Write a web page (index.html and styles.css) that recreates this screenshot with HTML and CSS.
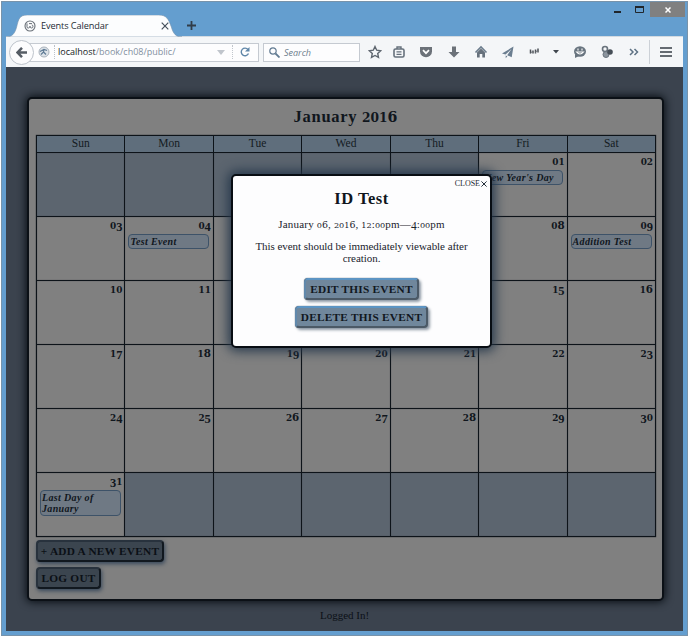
FILE: index.html
```html
<!DOCTYPE html>
<html lang="en">
<head>
<meta charset="utf-8">
<title>Events Calendar</title>
<link rel="stylesheet" href="styles.css">
</head>
<body>
<div class="window">
  <header class="titlebar">
    <div class="tab">
      <svg class="tab-shape" viewBox="0 0 182 22" preserveAspectRatio="none"><path d="M0 22C6 22 9 19 11 12C13 4 14 0 22 0H158C166 0 168 4 171 12C173 19 176 22 182 22Z" fill="#fcfdfe" stroke="#7793ac" stroke-width=".6"/></svg>
      <svg class="favicon" viewBox="0 0 12 12" fill="none" stroke="#697078"><circle cx="6" cy="6" r="5" stroke-width="1.1"/><path d="M3 3.500v3.300q0 1.500 1.500 1.200Q6 7.600 6 6.200q0 1.800 1.600 1.800Q9 8 9 6.200 9 5 7.800 5M5 3.600h3" stroke-width="1"/></svg>
      <span class="tab-title">Events Calendar</span>
      <svg class="tab-close" viewBox="0 0 8 8"><path d="M.7.7l6.6 6.6M7.3.7L.7 7.3" stroke="#46515c" stroke-width="1.2"/></svg>
    </div>
    <svg class="new-tab" viewBox="0 0 9 9"><path d="M4.5 0v9M0 4.5h9" stroke="#303c49" stroke-width="1.8"/></svg>
    <div class="controls">
      <svg class="min" viewBox="0 0 7 2"><path d="M0 1h7" stroke="#20262c" stroke-width="2"/></svg>
      <svg class="max" viewBox="0 0 9 7"><path d="M.5 1h8v5.500h-8z" fill="none" stroke="#20262c"/><path d="M0 1h9" stroke="#20262c" stroke-width="2"/></svg>
      <span class="win-close"><svg viewBox="0 0 6 6"><path d="M.5.5l5 5M5.500.5l-5 5" stroke="#fff" stroke-width="1.5"/></svg></span>
    </div>
  </header>
  <nav class="toolbar">
    <span class="back"><svg viewBox="0 0 11 11"><path d="M6 .8L1.500 5.500 6 10.200M2 5.500h9" fill="none" stroke="#555c64" stroke-width="2.500"/></svg></span>
    <div class="address">
      <svg class="globe" viewBox="0 0 12 12"><circle cx="6" cy="6" r="5" fill="#dce2e8" stroke="#aab3bc"/><path d="M2 5.500l4-2 3 1M6 3.500L5.500 6 3 8.500M5.500 6L8 8.500" fill="none" stroke="#5f7b95" stroke-width="1.2"/></svg>
      <span class="url"><b>localhost</b>/book/ch08/public/</span>
      <svg class="caret" viewBox="0 0 8 5"><path d="M0 0h8L4 5z" fill="#c0c5cc"/></svg>
      <span class="reload"><svg viewBox="0 0 10 10"><path d="M8.500 6.500A3.800 3.800 0 1 1 8 2.500" fill="none" stroke="#5f86a8" stroke-width="1.400"/><path d="M9.500 0v4.500H5z" fill="#5f86a8"/></svg></span>
    </div>
    <div class="search">
      <svg viewBox="0 0 11 11" fill="none" stroke="#627b92"><circle cx="4" cy="4" r="3.200" stroke-width="1.200"/><path d="M6.500 6.500l4 4" stroke-width="1.800"/></svg>
      <i>Search</i>
    </div>
    <div class="icons">
      <svg viewBox="0 0 14 14"><path d="M7 1.500l1.700 3.700 4 .5-3 2.700.8 4L7 10.500l-3.500 1.900.8-4-3-2.700 4-.5z" fill="none" stroke="#5e666f" stroke-width="1.400"/></svg>
      <svg viewBox="0 0 14 14"><rect x="2" y="4" width="10" height="8" rx="1.500" fill="none" stroke="#66717c" stroke-width="1.600"/><path d="M5 4V2h4v2" fill="none" stroke="#66717c" stroke-width="1.400"/><path d="M4.500 6.800h5M4.500 9.300h5" stroke="#66717c" stroke-width="1.200"/></svg>
      <svg viewBox="0 0 14 14"><path d="M1 2h12v4.500a6 5.700 0 0 1-12 0z" fill="#6c7279"/><path d="M4 5.200l3 3 3-3" fill="none" stroke="#fff" stroke-width="1.700"/></svg>
      <svg viewBox="0 0 14 14"><path d="M5 1.500h4V7h3.500L7 12.500 1.500 7H5z" fill="#6c7279"/></svg>
      <svg viewBox="0 0 14 14"><path d="M1.500 7.500L7 2l5.500 5.500" fill="none" stroke="#6c7d8d" stroke-width="1.600"/><path d="M3 7.500l4-4 4 4v5H8.300V9H5.700v3.500H3z" fill="#66717c"/></svg>
      <svg viewBox="0 0 14 14"><path d="M12.500 1.500L1 8.500l3.500 1 6-5.500-4.300 6.200 4.500 2zM4.700 10.500v2.700l1.700-2z" fill="#6b7e90"/></svg>
      <svg viewBox="0 0 14 14"><path d="M2.500 4.500v4M5 8.500V5.500M7.500 8.500V4.500M10 7.500V3.500" fill="none" stroke="#4c5157" stroke-width="1.500"/><path d="M2.500 8l2.500-2M7 7.500L10 5" stroke="#6d7278"/></svg>
      <svg class="drop" viewBox="0 0 6 4"><path d="M0 0h6L3 3.500z" fill="#3f464e"/></svg>
      <svg viewBox="0 0 14 14"><ellipse cx="7" cy="6.500" rx="6" ry="5.200" fill="#68747f"/><path d="M2 9v4l4-2" fill="#68747f"/><path d="M5 3.500v2M9 3.500v2M3.500 7q3.500 4 7 0z" fill="none" stroke="#fff" stroke-width="1.100"/></svg>
      <svg viewBox="0 0 14 14"><circle cx="5" cy="4" r="2.500" fill="none" stroke="#69737d" stroke-width="1.600"/><circle cx="6" cy="9.500" r="3" fill="#8b949d" stroke="#69737d"/><circle cx="10" cy="7" r="2.800" fill="#464e57"/></svg>
      <svg class="more" viewBox="0 0 14 14"><path d="M3 4l3 3-3 3M7.500 4l3 3-3 3" fill="none" stroke="#5f7284" stroke-width="1.500"/></svg>
      <span class="divider"></span>
      <svg viewBox="0 0 14 14"><path d="M1 3h12M1 7h12M1 11h12" stroke="#656b72" stroke-width="2"/></svg>
    </div>
  </nav>
  <main class="page">
    <section class="card">
      <h1>January 2016</h1>
      <div class="calendar" id="calendar"></div>
      <div class="actions">
        <a class="button dim add">+ Add a New Event</a>
        <a class="button dim out">Log Out</a>
      </div>
    </section>
    <p class="status">Logged In!</p>
  </main>
  <aside class="modal">
    <span class="close">CLOSE<svg viewBox="0 0 6 6"><path d="M.4.4l5.200 5.200M5.600.4L.4 5.600" stroke="#26313c"/></svg></span>
    <h2>ID Test</h2>
    <p class="when"><span class="figures">January 06, 2016, 12:00pm—4:00pm</span></p>
    <p class="about">This event should be immediately viewable after<br>creation.</p>
    <a class="button edit">Edit This Event</a>
    <a class="button delete">Delete This Event</a>
  </aside>
</div>
<script src="calendar.js"></script>
</body>
</html>
```
FILE: styles.css
```css
* { box-sizing: border-box; }
body { margin: 0; width: 690px; height: 638px; overflow: hidden; background: #fff; font-family: "Liberation Serif", serif; color: #10161d; }
svg { display: block; flex: none; }
.window { position: relative; width: 687px; height: 635px; margin: 1px 0 0 1px; padding: 0 4px; background: #649ecf; border: 1px solid #7893aa; }
.titlebar { height: 34px; display: flex; align-items: flex-end; position: relative; font-family: "Open Sans", sans-serif; }
.tab { width: 176px; height: 22px; position: relative; display: flex; align-items: center; padding: 0 13px 0 18px; margin-bottom: -1px; }
.tab-shape { position: absolute; left: 0; top: 0; width: 176px; height: 22px; }
.favicon { width: 12px; height: 12px; position: relative; }
.tab-title { position: relative; font-size: 9.2px; line-height: 14px; margin-left: 5px; letter-spacing: -.1px; color: #252c35; }
.tab-close { position: relative; width: 8px; height: 8px; margin-left: auto; }
.new-tab { width: 9px; height: 9px; margin: 0 0 6px 5px; }
.controls { align-self: flex-start; margin-left: auto; display: flex; align-items: flex-start; }
.min { width: 7px; height: 2px; margin: 9px 14px 0 0; }
.max { width: 9px; height: 7px; margin: 4px 6px 0 0; }
.win-close { width: 35px; height: 15px; margin-right: -2px; background: #808080; display: grid; place-items: center; }
.win-close svg { width: 6px; height: 6px; }
.toolbar { height: 31px; background: #f4f6f8; border-top: 1px solid #d3dae1; display: flex; align-items: center; font-family: "Open Sans", sans-serif; }
.back { width: 25px; height: 25px; border: 1px solid #bdc3cb; border-radius: 50%; background: #fcfcfd; display: grid; place-items: center; margin-left: 3px; position: relative; flex: none; }
.back svg { width: 11px; height: 11px; }
.address { width: 231px; height: 19px; margin-left: -6px; padding-left: 9px; border: 1px solid #c5cad1; background: #fdfdfe; display: flex; align-items: center; flex: none; }
.globe { width: 12px; height: 12px; }
.url { border-left: 1px dotted #bcc2c9; margin-left: 4px; padding-left: 3px; font-size: 9px; line-height: 14px; color: #8390a0; white-space: nowrap; }
.url b { font-weight: 400; color: #171d25; }
.caret { width: 8px; height: 5px; margin-left: auto; }
.reload { border-left: 1px dotted #c1c6cc; margin-left: 7px; padding: 2px 8px 2px 7px; }
.reload svg { width: 10px; height: 10px; }
.search { width: 97px; height: 19px; margin-left: 4px; padding-left: 5px; border: 1px solid #c5cad1; background: #fdfdfe; display: flex; align-items: center; gap: 4px; flex: none; font-size: 9px; color: #6c7c8c; }
.search svg { width: 11px; height: 11px; }
.icons { display: flex; align-items: center; margin-left: 8px; }
.icons svg { width: 14px; height: 14px; margin-right: 13.300px; }
.icons svg:first-child { margin-right: 10px; }
.icons svg.drop { width: 6px; height: 4px; margin: 0 14px 0 -3px; }
.icons svg.more { margin-right: 8px; }
.icons svg:last-child { margin: 0 0 0 9px; }
.divider { width: 1px; height: 24px; background: #ccd1d7; }
.page { height: 564px; background: #3b434e; padding-top: 30px; }
.card { width: 637px; height: 504px; margin-left: 21px; border: 2px solid #0b1016; border-radius: 5px; background: #808080; box-shadow: 0 0 8px 1px #080d13; padding: 7px 7px 0; }
h1 { margin: 0; height: 29px; line-height: 22px; font-size: 16.500px; letter-spacing: .7px; text-align: center; white-space: nowrap; }
.calendar { width: 620px; height: 402px; display: grid; grid-template-columns: repeat(7, 1fr); grid-template-rows: 16px repeat(6, 63px); gap: 1px; padding: 1px; background: #0d1319; box-shadow: 0 0 1px #10161d; }
.weekday { background: #5f6e7c; text-align: center; font-size: 11.500px; line-height: 15px; color: #141b22; }
.day { background: #808080; box-shadow: inset 0 0 1px #343a41; padding: 1px 3px 0; }
.day.empty { background: #5c656f; }
.date { height: 15px; line-height: 15px; font-size: 12px; font-weight: 700; text-align: right; margin-right: -1px; white-space: nowrap; }
.date.covered { visibility: hidden; }
.low, .tall, .drop-digit { font-family: "DejaVu Serif", serif; line-height: 1; letter-spacing: 0; }
.low { font-size: .74em; }
.tall { font-size: .86em; }
.drop-digit { font-family: "Liberation Serif", serif; font-size: 1.04em; vertical-align: -2px; line-height: 0; }
.low, .tall { line-height: 0; }
.event { width: 81px; min-height: 15px; border: 1px solid #3d5268; border-radius: 4px; background: #6f7984; padding: 1px; font-size: 10px; line-height: 11px; font-weight: 700; font-style: italic; letter-spacing: .35px; white-space: nowrap; margin-top: 1px; }
.actions { display: flex; flex-direction: column; align-items: flex-start; gap: 5px; padding-top: 3px; }
.button { display: grid; place-items: center; height: 22px; border: 2px solid #4b5966; border-top-color: #5c94c3; border-left-color: #6189ac; border-radius: 4px; background: #70879c; box-shadow: 2px 2px 3px #8d98a4, 0 0 1px #27323d; font-size: 11.300px; letter-spacing: .25px; font-weight: 700; text-transform: uppercase; color: #11171e; white-space: nowrap; }
.button.dim { background: #3b454f; border-color: #28323d #11181f #11181f #28323d; color: #0b1016; box-shadow: 1px 2px 4px #36475a; }
.add { width: 128px; }
.out { width: 65px; }
.status { margin: 5px 0 0; text-align: center; font-size: 11px; line-height: 18px; color: #0b1016; }
.modal { position: absolute; left: 229px; top: 172px; width: 261px; height: 174px; border: 2px solid #080d13; border-radius: 5px; background: #fdfdfe; box-shadow: 0 0 12px 3px #26384b; display: flex; flex-direction: column; align-items: center; }
.close { position: absolute; top: 3px; right: 3px; display: flex; align-items: center; gap: 1px; font-size: 8px; line-height: 10px; color: #1b2630; }
.close svg { width: 6px; height: 6px; }
h2 { margin: 12px 0 0; font-size: 16.500px; line-height: 22px; letter-spacing: .5px; }
.modal p { margin: 0; font-size: 11px; line-height: 12px; text-align: center; white-space: nowrap; color: #1a232d; }
.modal .when { margin-top: 8px; height: 14px; letter-spacing: .2px; }
.modal .about { margin-top: 8px; letter-spacing: -.05px; }
.edit { width: 115px; margin-top: 14px; }
.delete { width: 133px; margin-top: 6px; }
```
FILE: calendar.js
```js
// Old-style figures: 0, 1, 2 sit at x-height; 3, 4, 5, 7, 9 hang below the baseline.
function figures(text) {
  return text
    .replace(/[012]+|[34579]+|[68]+/g, run => {
      const name = /[012]/.test(run) ? 'low' : /[68]/.test(run) ? 'tall' : 'drop-digit';
      return `<span class="${name}">${run}</span>`;
    });
}

const events = { 1: "New Year's Day", 4: 'Test Event', 9: 'Addition Test', 31: 'Last Day of<br>January' };
// Dates that lie entirely beneath the dialog.
const covered = [5, 6, 7, 12, 13, 14];
let html = ['Sun', 'Mon', 'Tue', 'Wed', 'Thu', 'Fri', 'Sat']
  .map(name => `<div class="weekday">${name}</div>`).join('');

for (let i = 0; i < 42; i++) {
  const day = i - 4;
  if (day < 1 || day > 31) {
    html += '<div class="day empty"></div>';
    continue;
  }
  const event = events[day] ? `<div class="event">${events[day]}</div>` : '';
  const state = covered.includes(day) ? ' covered' : '';
  html += `<div class="day"><div class="date${state}">${figures(String(day).padStart(2, '0'))}</div>${event}</div>`;
}
document.getElementById('calendar').innerHTML = html;
document.querySelectorAll('.figures, h1').forEach(el => {
  el.innerHTML = figures(el.textContent);
});
```
